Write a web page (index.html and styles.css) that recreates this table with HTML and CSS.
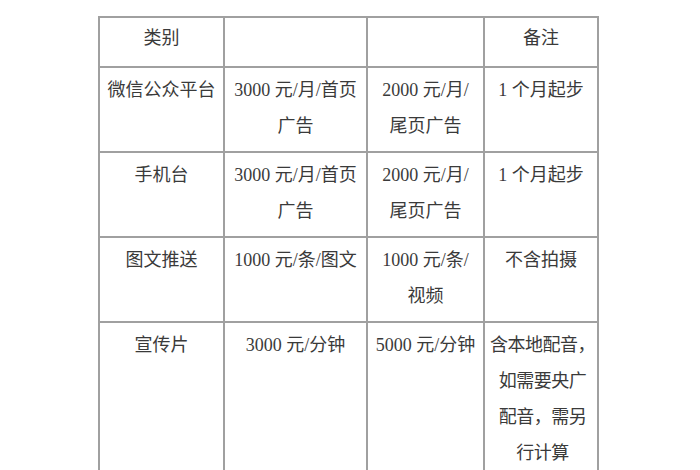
FILE: index.html
```html
<!DOCTYPE html>
<html lang="zh-CN">
<head>
<meta charset="utf-8">
<title>广告价格表</title>
<link rel="stylesheet" href="styles.css">
</head>
<body>
<table class="price-table">
  <colgroup>
    <col class="c1">
    <col class="c2">
    <col class="c3">
    <col class="c4">
  </colgroup>
  <tr class="row-head">
    <td>类别</td>
    <td></td>
    <td></td>
    <td>备注</td>
  </tr>
  <tr class="row-two">
    <td>微信公众平台</td>
    <td>3000 元/月/首页<br>广告</td>
    <td>2000 元/月/<br>尾页广告</td>
    <td>1 个月起步</td>
  </tr>
  <tr class="row-two">
    <td>手机台</td>
    <td>3000 元/月/首页<br>广告</td>
    <td>2000 元/月/<br>尾页广告</td>
    <td>1 个月起步</td>
  </tr>
  <tr class="row-two">
    <td>图文推送</td>
    <td>1000 元/条/图文</td>
    <td>1000 元/条/<br>视频</td>
    <td>不含拍摄</td>
  </tr>
  <tr class="row-last">
    <td>宣传片</td>
    <td>3000 元/分钟</td>
    <td>5000 元/分钟</td>
    <td class="note">含本地配音，<br>如需要央广<br>配音，需另<br>行计算</td>
  </tr>
</table>
</body>
</html>
```

FILE: styles.css
```css
html, body {
  margin: 0;
  padding: 0;
  background: #ffffff;
}

body {
  padding: 16px 0 0 98px;
  overflow: hidden;
  height: 470px;
  box-sizing: border-box;
}

.price-table {
  border-collapse: collapse;
  table-layout: fixed;
  width: 499px;
  font-family: "Liberation Serif", "Noto Sans CJK SC", serif;
  font-size: 18px;
  color: #3a3a3a;
}

.c1 { width: 125px; }
.c2 { width: 143px; }
.c3 { width: 117px; }
.c4 { width: 114px; }

.price-table td {
  border: 2px solid #a0a0a0;
  padding: 4px 0 0 0;
  line-height: 36px;
  text-align: center;
  vertical-align: top;
  white-space: nowrap;
  overflow: hidden;
  box-sizing: border-box;
}

.row-head td { height: 50px; padding-top: 2px; }
.row-two td { height: 85px; }
.row-last td { height: 160px; }

.price-table td.note { letter-spacing: -0.5px; padding-left: 3px; }
```
